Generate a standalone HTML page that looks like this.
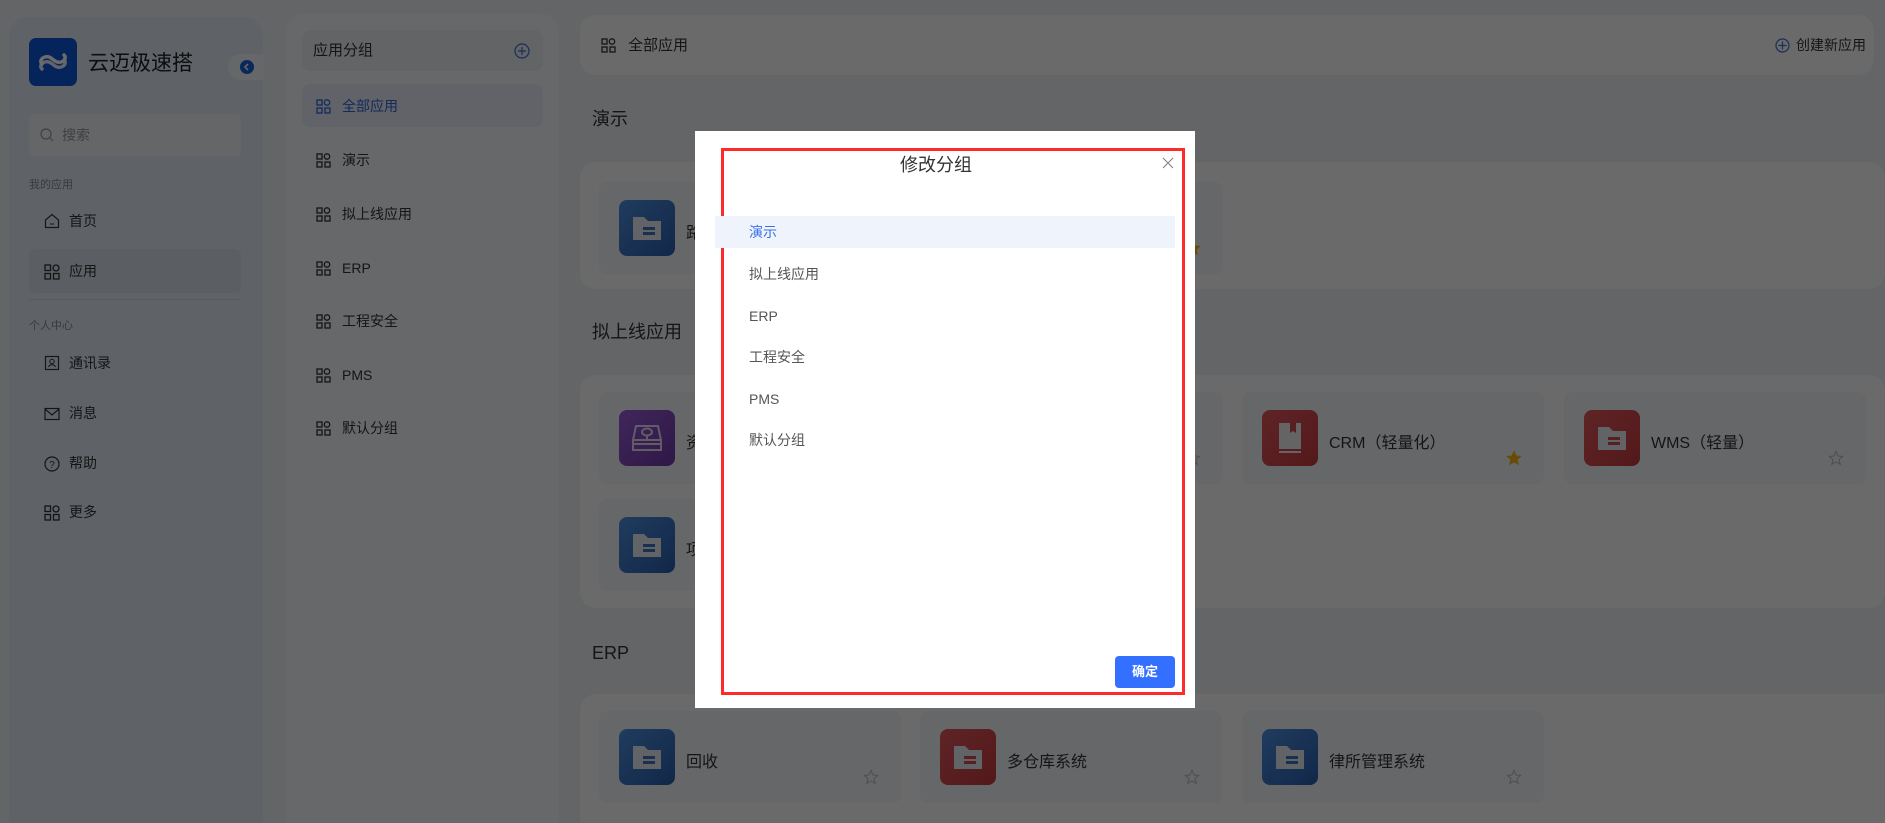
<!DOCTYPE html>
<html><head><meta charset="utf-8"><style>
*{box-sizing:border-box;margin:0;padding:0}
html,body{width:1885px;height:823px;overflow:hidden}
body{background:#eef0f3;font-family:"Liberation Sans","Noto Sans CJK SC",sans-serif;position:relative;color:#333}
.a{position:absolute}
.t{position:absolute;white-space:nowrap;line-height:1}
.side{left:9px;top:17px;width:254px;height:806px;background:#e3ebf7;border-radius:18px 18px 0 0}
.p2{left:286px;top:14px;width:273px;height:809px;background:#f6f7f9;border-radius:18px 18px 0 0}
.sec{background:#fdfdfe;border-radius:16px}
.card{position:absolute;background:#f4f6f9;border-radius:8px}
.ico{position:absolute;width:56px;height:56px;border-radius:8px}
.blue{background:linear-gradient(135deg,#4d8fe0,#2a5eae)}
.red{background:linear-gradient(135deg,#e0575c,#c43a3f)}
.purple{background:linear-gradient(135deg,#9a5ad8,#6e3aa8)}
.nm{position:absolute;font-size:16px;color:#333;white-space:nowrap}
.ov{position:fixed;left:0;top:0;width:1885px;height:823px;background:rgba(0,0,0,.58)}
.mi{position:absolute;left:749px;font-size:14px;color:#555}
</style></head><body>
<div class="a side"></div>
<div class="a" style="left:29px;top:38px;width:48px;height:48px;background:#0d56d8;border-radius:7px"></div>
<svg class="a" style="left:36px;top:50px" width="34" height="24" viewBox="0 0 34 24"><path d="M6 14c-4-4 3-10 9-6l4 3c6 4 13-2 9-6" fill="none" stroke="#fff" stroke-width="3.5" stroke-linecap="round"/><path d="M28 10c4 4-3 10-9 6l-4-3c-6-4-13 2-9 6" fill="none" stroke="#fff" stroke-width="3.5" stroke-linecap="round" opacity=".9"/></svg>
<div class="t" style="left:88px;top:53px;font-size:21px;color:#222">云迈极速搭</div>
<div class="a" style="left:228px;top:54px;width:36px;height:26px;background:#f4f6fa;border-radius:13px 0 0 13px"></div>
<div class="a" style="left:240px;top:60px;width:14px;height:14px;border-radius:50%;background:#1a5fd6"></div>
<svg class="a" style="left:243px;top:63px" width="8" height="8"><path d="M5 1L2 4l3 3" stroke="#fff" stroke-width="1.5" fill="none"/></svg>
<div class="a" style="left:29px;top:114px;width:212px;height:42px;background:#f1f3f7;border-radius:6px"></div>
<svg class="a" style="left:40px;top:128px" width="14" height="14"><circle cx="6" cy="6" r="5" fill="none" stroke="#999" stroke-width="1.2"/><path d="M10 10l3 3" stroke="#999" stroke-width="1.2"/></svg>
<div class="t" style="left:62px;top:128px;font-size:14px;color:#999">搜索</div>
<div class="t" style="left:29px;top:180px;font-size:11px;color:#888">我的应用</div>
<svg class="a" style="left:44px;top:213px" width="16" height="16"><path d="M1.5 7L8 1.5 14.5 7V14.5H1.5Z" fill="none" stroke="#333" stroke-width="1.2"/><path d="M6 11h4" stroke="#333"/></svg>
<div class="t" style="left:69px;top:214px;font-size:14px">首页</div>
<div class="a" style="left:29px;top:249px;width:212px;height:44px;background:#d8dfea;border-radius:6px"></div>
<svg class="a" style="left:44px;top:264px" width="16" height="16"><g fill="none" stroke="#333" stroke-width="1.3"><rect x="1" y="1" width="5.5" height="5.5"/><circle cx="12" cy="4" r="3"/><rect x="1" y="9.5" width="5.5" height="5.5"/><rect x="9.5" y="9.5" width="5.5" height="5.5"/></g></svg>
<div class="t" style="left:69px;top:264px;font-size:14px">应用</div>
<div class="a" style="left:29px;top:299px;width:212px;height:1px;background:#d3d8e0"></div>
<div class="t" style="left:29px;top:321px;font-size:11px;color:#888">个人中心</div>
<svg class="a" style="left:44px;top:355px" width="16" height="16"><rect x="1.5" y="1.5" width="13" height="13" fill="none" stroke="#333" stroke-width="1.2"/><circle cx="8" cy="6.5" r="2.2" fill="none" stroke="#333"/><path d="M4.5 12c1-3 6-3 7 0" fill="none" stroke="#333"/></svg>
<div class="t" style="left:69px;top:356px;font-size:14px">通讯录</div>
<svg class="a" style="left:44px;top:406px" width="16" height="16"><rect x="1" y="2.5" width="14" height="11" fill="none" stroke="#333" stroke-width="1.2"/><path d="M1 3l7 6 7-6" fill="none" stroke="#333" stroke-width="1.2"/></svg>
<div class="t" style="left:69px;top:406px;font-size:14px">消息</div>
<svg class="a" style="left:44px;top:456px" width="16" height="16"><circle cx="8" cy="8" r="7" fill="none" stroke="#333" stroke-width="1.2"/><text x="8" y="12" font-size="10" text-anchor="middle" fill="#333" font-family="Liberation Sans">?</text></svg>
<div class="t" style="left:69px;top:456px;font-size:14px">帮助</div>
<svg class="a" style="left:44px;top:505px" width="16" height="16"><g fill="none" stroke="#333" stroke-width="1.3"><rect x="1" y="1" width="5.5" height="5.5"/><circle cx="12" cy="4" r="3"/><rect x="1" y="9.5" width="5.5" height="5.5"/><rect x="9.5" y="9.5" width="5.5" height="5.5"/></g></svg>
<div class="t" style="left:69px;top:505px;font-size:14px">更多</div>

<div class="a p2"></div>
<div class="a" style="left:302px;top:30px;width:241px;height:41px;background:#eceef2;border-radius:8px"></div>
<div class="t" style="left:313px;top:43px;font-size:15px;color:#333">应用分组</div>
<svg class="a" style="left:514px;top:43px" width="16" height="16"><circle cx="8" cy="8" r="7" fill="none" stroke="#3a6fd8" stroke-width="1.2"/><path d="M8 4v8M4 8h8" stroke="#3a6fd8" stroke-width="1.2"/></svg>
<div class="a" style="left:302px;top:84px;width:241px;height:43px;background:#e6ecf7;border-radius:8px"></div>
<div id="g2"></div>

<div class="a sec" style="left:580px;top:15px;width:1294px;height:60px"></div>
<svg class="a" style="left:601px;top:38px" width="15" height="15"><g fill="none" stroke="#333" stroke-width="1.3"><rect x="1" y="1" width="5" height="5"/><circle cx="11" cy="3.5" r="2.7"/><rect x="1" y="9" width="5" height="5"/><rect x="9" y="9" width="5" height="5"/></g></svg>
<div class="t" style="left:628px;top:38px;font-size:15px">全部应用</div>
<svg class="a" style="left:1775px;top:38px" width="15" height="15"><circle cx="7.5" cy="7.5" r="6.5" fill="none" stroke="#3a6fd8" stroke-width="1.2"/><path d="M7.5 3.5v8M3.5 7.5h8" stroke="#3a6fd8" stroke-width="1.2"/></svg>
<div class="t" style="left:1796px;top:38px;font-size:14px">创建新应用</div>

<div class="t" style="left:592px;top:110px;font-size:18px">演示</div>
<div class="a sec" style="left:580px;top:162px;width:1305px;height:127px"></div>
<div class="t" style="left:592px;top:323px;font-size:18px">拟上线应用</div>
<div class="a sec" style="left:580px;top:375px;width:1305px;height:233px"></div>
<div class="t" style="left:592px;top:644px;font-size:18px">ERP</div>
<div class="a sec" style="left:580px;top:694px;width:1305px;height:129px;border-radius:16px 0 0 0"></div>
<div id="cards"></div>

<div class="ov"></div>

<div class="a" style="left:695px;top:131px;width:500px;height:577px;background:#fff"></div>
<div class="a" style="left:721px;top:148px;width:464px;height:547px;border:3px solid #ff2a2a"></div>
<div class="t" style="left:900px;top:156px;font-size:18px;color:#333">修改分组</div>
<svg class="a" style="left:1162px;top:157px" width="12" height="12"><path d="M1 1l10 10M11 1L1 11" stroke="#888" stroke-width="1.2"/></svg>
<div class="a" style="left:715px;top:216px;width:460px;height:32px;background:#eff3fc"></div>
<div class="t mi" style="top:225px;color:#3a6fe8">演示</div>
<div class="t mi" style="top:267px">拟上线应用</div>
<div class="t mi" style="top:309px">ERP</div>
<div class="t mi" style="top:350px">工程安全</div>
<div class="t mi" style="top:392px">PMS</div>
<div class="t mi" style="top:433px">默认分组</div>
<div class="a" style="left:1115px;top:656px;width:60px;height:32px;background:#3370ff;border-radius:4px;color:#fff;font-size:13px;font-weight:bold;text-align:center;line-height:32px">确定</div>

<script>
var g='<svg width="15" height="15"><g fill="none" stroke="COL" stroke-width="1.3"><rect x="1" y="1" width="5" height="5"/><circle cx="11" cy="3.5" r="2.7"/><rect x="1" y="9" width="5" height="5"/><rect x="9" y="9" width="5" height="5"/></g></svg>';
var items=[["全部应用",106,"#2f64d8"],["演示",160],["拟上线应用",214],["ERP",268],["工程安全",321],["PMS",375],["默认分组",428]];
var h='';items.forEach(function(it){var c=it[2]||"#333";h+='<div class="a" style="left:316px;top:'+(it[1]-7)+'px">'+g.replace("COL",c)+'</div><div class="t" style="left:342px;top:'+(it[1]-7)+'px;font-size:14px;color:'+c+'">'+it[0]+'</div>';});
document.getElementById('g2').innerHTML=h;
var folder='<svg width="56" height="56" viewBox="0 0 56 56"><path d="M14 17h11l4 4h13v19H14z" fill="#e8edf3"/><rect x="24" y="27" width="12" height="3" fill="COL"/><rect x="24" y="32" width="12" height="3" fill="COL"/></svg>';
var box='<svg width="56" height="56" viewBox="0 0 56 56"><g fill="none" stroke="#e6dcf3" stroke-width="2"><path d="M17 16h22l3 14v10H14V30z"/><path d="M14 30h28M14 34h28"/><ellipse cx="28" cy="22" rx="5" ry="3.5"/><path d="M28 25.5V30"/></g></svg>';
var book='<svg width="56" height="56" viewBox="0 0 56 56"><rect x="17" y="13" width="22" height="26" fill="#eee"/><path d="M28 13v10l3-2 3 2V13z" fill="#d14a4f"/><rect x="17" y="41" width="22" height="2" fill="#eee"/></svg>';
var star='<svg width="16" height="16" viewBox="0 0 24 24"><path d="M12 2l3 7 7 .6-5.4 4.7 1.7 7.2L12 17.8 5.7 21.5l1.7-7.2L2 9.6 9 9z" fill="FILL" stroke="STR" stroke-width="1.5"/></svg>';
var cards=[
[599,182,"blue",folder.replace(/COL/g,"#3d73bd"),"路",1],
[921,182,"blue",folder.replace(/COL/g,"#3d73bd"),"",2],
[599,392,"purple",box,"资",0],
[921,392,"blue",folder.replace(/COL/g,"#3d73bd"),"",0],
[1242,392,"red",book,"CRM（轻量化）",2],
[1564,392,"red",folder.replace(/COL/g,"#d14a4f"),"WMS（轻量）",0],
[599,499,"blue",folder.replace(/COL/g,"#3d73bd"),"项",0],
[599,711,"blue",folder.replace(/COL/g,"#3d73bd"),"回收",0],
[920,711,"red",folder.replace(/COL/g,"#d14a4f"),"多仓库系统",0],
[1242,711,"blue",folder.replace(/COL/g,"#3d73bd"),"律所管理系统",0]];
var c='';cards.forEach(function(k){var x=k[0],y=k[1];
c+='<div class="card" style="left:'+x+'px;top:'+y+'px;width:302px;height:92px"></div>';
c+='<div class="ico '+k[2]+'" style="left:'+(x+20)+'px;top:'+(y+18)+'px">'+k[3]+'</div>';
c+='<div class="nm" style="left:'+(x+87)+'px;top:'+(y+37)+'px">'+k[4]+'</div>';
var s=k[5]==2?star.replace("FILL","#f5b416").replace("STR","#f5b416"):star.replace("FILL","none").replace("STR","#bbb");
c+='<div class="a" style="left:'+(x+264)+'px;top:'+(y+58)+'px">'+s+'</div>';});
document.getElementById('cards').innerHTML=c;
</script>
</body></html>
